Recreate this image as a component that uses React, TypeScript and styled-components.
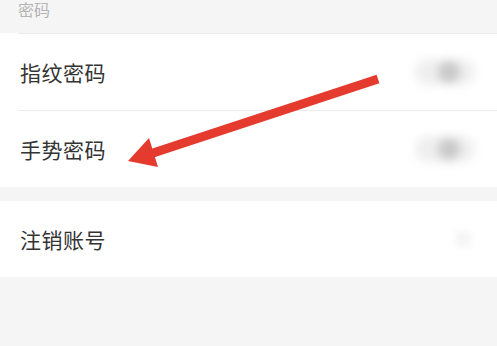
import React from "react";
import styled, { createGlobalStyle } from "styled-components";

const GlobalStyle = createGlobalStyle`
  html, body {
    margin: 0;
    padding: 0;
    background: #f5f5f5;
    font-family: "Noto Sans CJK SC", "Noto Sans", sans-serif;
  }
`;

const SPage = styled.div`
  position: relative;
  width: 497px;
  height: 346px;
  overflow: hidden;
  background: #f5f5f5;
`;

const SHeader = styled.div`
  height: 33px;
  padding-left: 18px;
  display: flex;
  align-items: flex-start;
  font-size: 16px;
  line-height: 18px;
  color: #b4b4b4;
`;

const SGroup = styled.div<{ $gap?: number }>`
  background: #ffffff;
  margin-top: ${(p) => p.$gap ?? 0}px;
`;

const SRow = styled.div<{ $divider?: boolean }>`
  height: 76px;
  display: flex;
  align-items: center;
  justify-content: space-between;
  padding-right: 22px;
  border-top: ${(p) => (p.$divider ? "1px solid #ebebeb" : "none")};
  margin-left: ${(p) => (p.$divider ? "18px" : "0")};
  padding-left: ${(p) => (p.$divider ? "2px" : "20px")};
`;

const SLabel = styled.span`
  font-size: 21px;
  color: #333333;
  letter-spacing: 0.5px;
`;

const SToggle = styled.div`
  width: 60px;
  height: 26px;
  border-radius: 13px;
  background: #efefef;
  position: relative;
  filter: blur(5px);
  margin-right: 0;
  &::after {
    content: "";
    position: absolute;
    left: 23px;
    top: 2px;
    width: 22px;
    height: 22px;
    border-radius: 50%;
    background: #c9c9c9;
  }
`;

const SChevron = styled.div`
  width: 16px;
  height: 16px;
  background: #f6f6f6;
  filter: blur(3px);
  margin-right: 4px;
`;

const SArrow = styled.svg`
  position: absolute;
  left: 0;
  top: 0;
  pointer-events: none;
`;

const App: React.FC = () => {
  return (
    <SPage>
      <GlobalStyle />
      <SHeader>密码</SHeader>
      <SGroup>
        <SRow $divider>
          <SLabel>指纹密码</SLabel>
          <SToggle />
        </SRow>
        <SRow $divider>
          <SLabel>手势密码</SLabel>
          <SToggle />
        </SRow>
      </SGroup>
      <SGroup $gap={14}>
        <SRow>
          <SLabel>注销账号</SLabel>
          <SChevron />
        </SRow>
      </SGroup>
      <SArrow width="497" height="346" viewBox="0 0 497 346">
        <line
          x1="378"
          y1="79"
          x2="150"
          y2="154"
          stroke="#e53b2f"
          strokeWidth="9"
        />
        <polygon points="128,161 149,138 158,167" fill="#e53b2f" />
      </SArrow>
    </SPage>
  );
};

export default App;
